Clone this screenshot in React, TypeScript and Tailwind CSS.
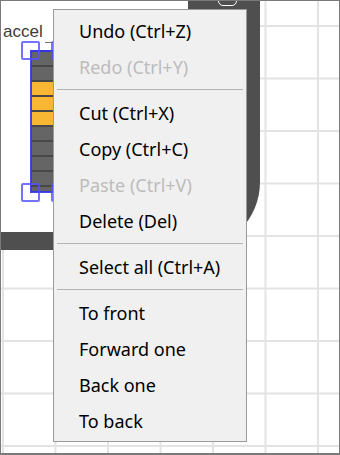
import React from "react";

type Entry = { label?: string; disabled?: boolean; sep?: boolean };

const entries: Entry[] = [
  { label: "Undo (Ctrl+Z)" },
  { label: "Redo (Ctrl+Y)", disabled: true },
  { sep: true },
  { label: "Cut (Ctrl+X)" },
  { label: "Copy (Ctrl+C)" },
  { label: "Paste (Ctrl+V)", disabled: true },
  { label: "Delete (Del)" },
  { sep: true },
  { label: "Select all (Ctrl+A)" },
  { sep: true },
  { label: "To front" },
  { label: "Forward one" },
  { label: "Back one" },
  { label: "To back" },
];

const gridX = [3, 55.5, 108, 160.5, 213, 265.5, 318];
const gridY = [26, 78.5, 131, 183.5, 236, 288.5, 341, 393.5, 446];

// rows of the bar graph, true = lit
const rows = [false, false, true, true, true, false, false, false, false, false];

function Grid() {
  return (
    <svg className="absolute inset-0" width="340" height="455">
      {gridX.map((x) => (
        <rect key={"x" + x} x={x - 1} y={0} width={2} height={455} fill="#e3e3e3" />
      ))}
      {gridY.map((y) => (
        <rect key={"y" + y} x={0} y={y - 1} width={340} height={2} fill="#e3e3e3" />
      ))}
    </svg>
  );
}

function Handle({ className }: { className: string }) {
  return (
    <div
      className={
        "absolute w-[19px] h-[19px] rounded-[2px] border-2 border-[#5050ff]/80 " + className
      }
    />
  );
}

export default function App() {
  return (
    <div className="relative w-[340px] h-[455px] overflow-hidden bg-white">
      <Grid />

      {/* board frame */}
      <div className="absolute left-[-100px] top-[-100px] w-[360px] h-[350px] bg-[#4f4f4f] rounded-br-[68px]" />
      <div className="absolute left-[-100px] top-[-100px] w-[288px] h-[332px] bg-white" />
      <div className="absolute left-[218px] top-[-7px] w-[19px] h-[13px] rounded-[5px] border-[1.5px] border-white bg-[#4f4f4f]" />

      {/* accel part */}
      <div className="absolute left-[3px] top-[22px] text-[17px] leading-[20px] text-[#3c3c3c] font-['Liberation_Sans',Arial,sans-serif]">
        accel
      </div>
      <div className="absolute left-[45px] top-[42px] w-[8px] h-px bg-[#777]" />
      <div className="absolute left-[31px] top-[50px] w-[30px] h-[142px] flex flex-col bg-[#616161] overflow-hidden">
        {rows.map((lit, i) => (
          <div
            key={i}
            className={
              "h-[15px] shrink-0 border-t-2 border-[#474747] " + (lit ? "bg-[#f8b732]" : "bg-[#656565]")
            }
          />
        ))}
      </div>
      <div className="absolute left-[30px] top-[50px] w-[31px] h-[143px] border-2 border-[#3434f0]/90" />
      <Handle className="left-[21px] top-[41px]" />
      <Handle className="left-[51px] top-[41px]" />
      <Handle className="left-[21px] top-[183px]" />
      <Handle className="left-[51px] top-[183px]" />

      {/* context menu */}
      <div className="absolute left-[53px] top-[9px] w-[194px] border border-[#9a9a9a] bg-[#f0f0f0] pt-[3px] pb-[2px] font-['Noto_Sans','Open_Sans',sans-serif]">
        {entries.map((e, i) =>
          e.sep ? (
            <div key={i} className="h-[10px] px-[3px] pt-[4px]">
              <div className="h-px bg-[#b4b4b4]" />
            </div>
          ) : (
            <div
              key={i}
              className={
                "h-[36px] flex items-center pl-[25px] text-[18px] " +
                (e.disabled ? "text-[#bcbcbc]" : "text-black")
              }
            >
              {e.label}
            </div>
          )
        )}
      </div>

      <div className="absolute inset-0 border border-[#7a7a7a] border-b-2 pointer-events-none" />
    </div>
  );
}
